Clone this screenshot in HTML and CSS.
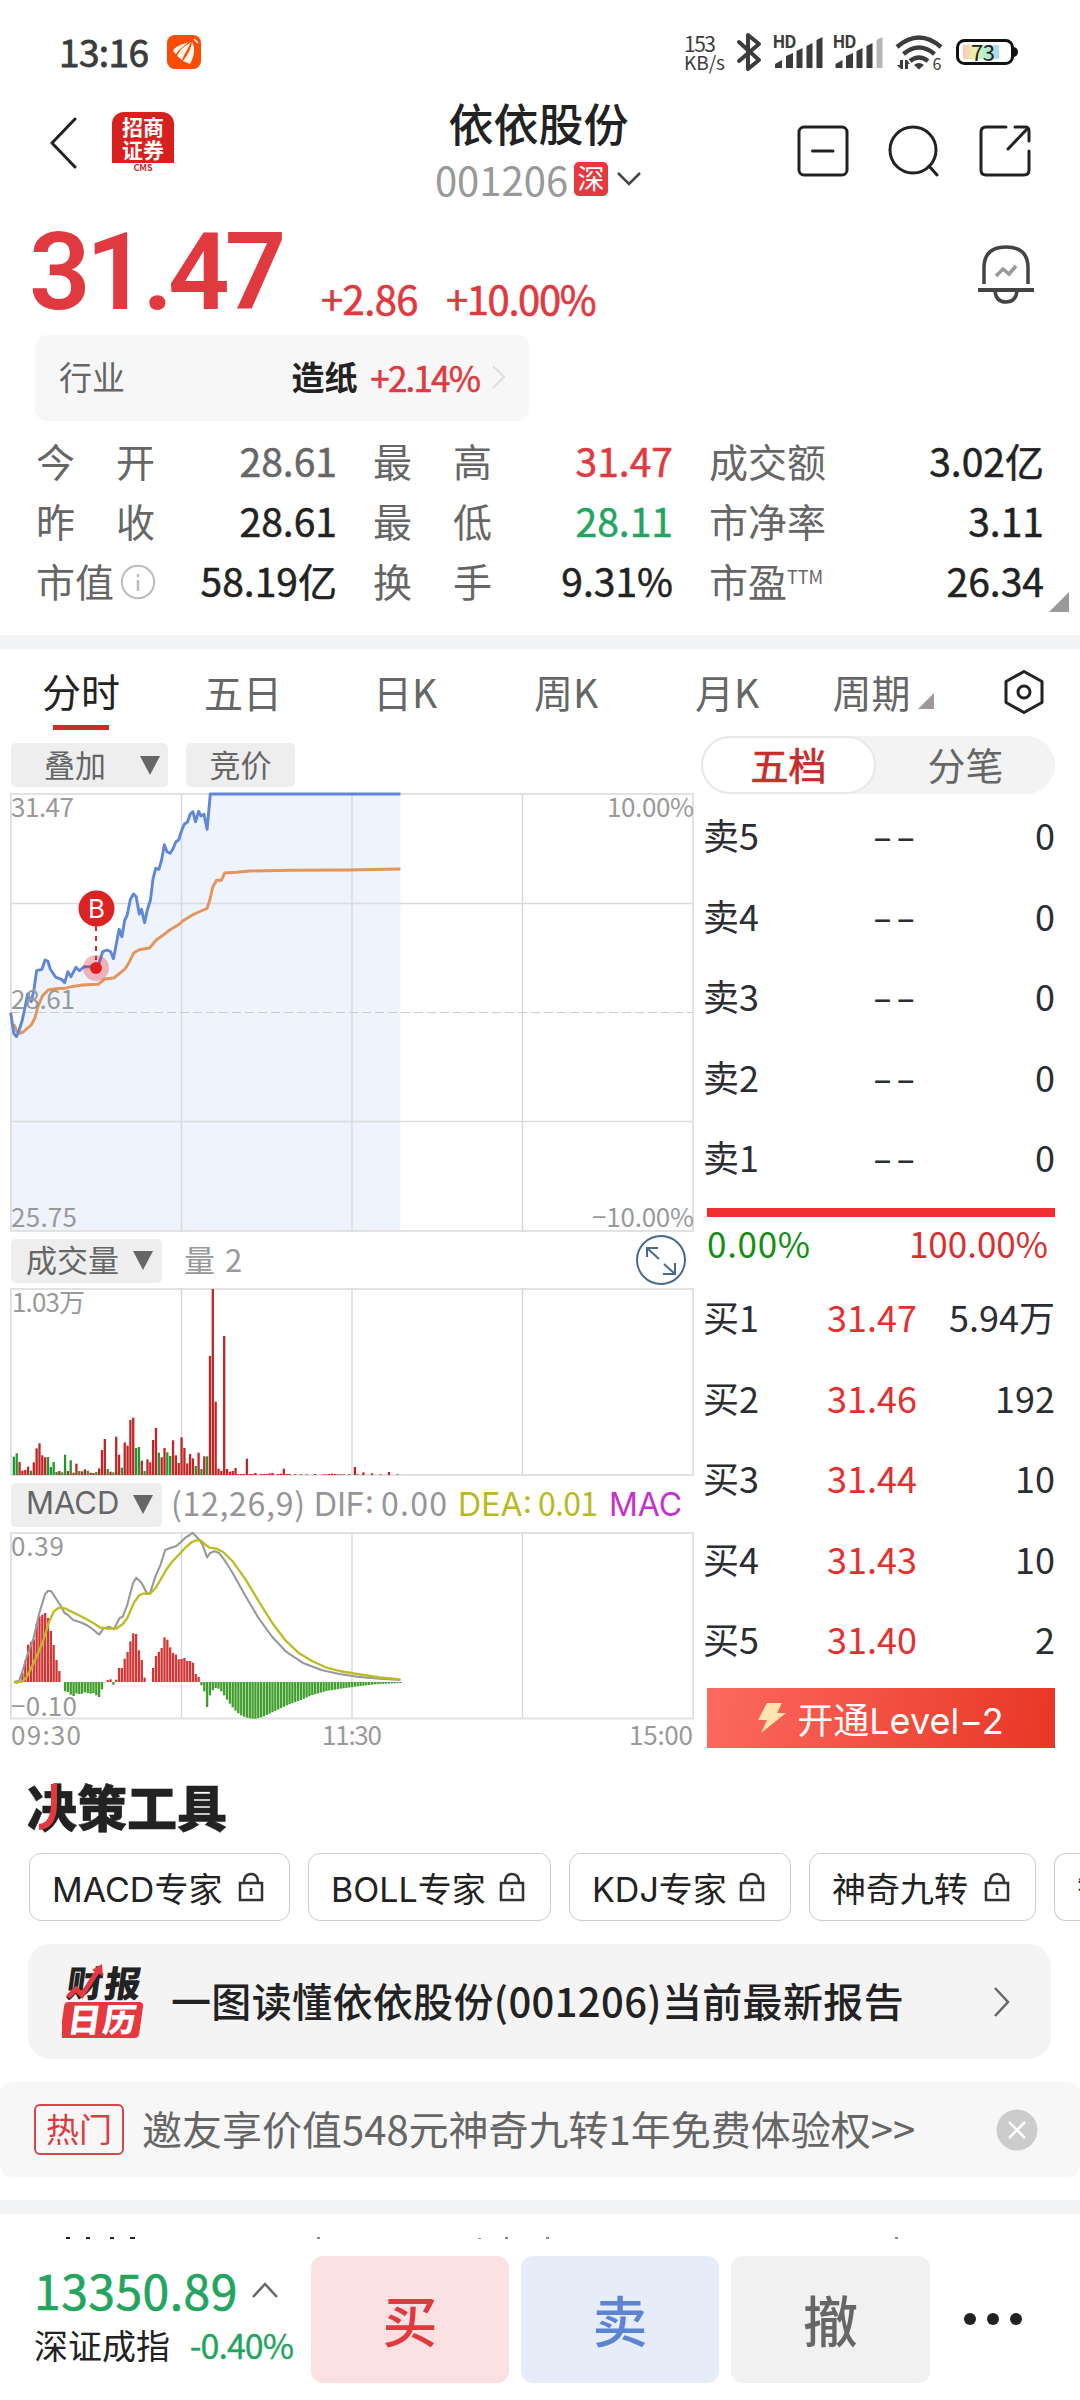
FILE: index.html
```html
<!DOCTYPE html>
<html lang="zh-CN">
<head>
<meta charset="utf-8">
<title>依依股份 001206</title>
<link rel="stylesheet" href="styles.css">
</head>
<body>
<div class="status">
  <span class="clock">13:16</span>
  <svg class="status-app" width="34" height="34" viewBox="0 0 34 34">
    <rect width="34" height="34" rx="8" fill="#fb4c05"/>
    <path d="M6 16C8 11 14 10 22 7C17 11 12 14 9 19ZM10 21C13 14 18 11 24 7C21 14 17 19 15 25ZM16 26C21 19 24 14 25 7C29 14 27 22 23 29Z" fill="#fff6e8"/>
    <path d="M27 4L31 8" stroke="#fff" stroke-width="1.5"/>
  </svg>
  <svg class="status-icons" width="340" height="44" viewBox="680 30 340 44">
    <g fill="#3c3c3c">
      <text x="684" y="52" font-size="21" textLength="32">153</text>
      <text x="684" y="70" font-size="19" textLength="41">KB/s</text>
      <text x="772.500" y="48" font-size="17" font-weight="700" textLength="24">HD</text>
      <text x="832.500" y="48" font-size="17" font-weight="700" textLength="24">HD</text>
      <path d="M739 42L759 60L748 69V35L759 44L739 61" fill="none" stroke="#3c3c3c" stroke-width="4" stroke-linejoin="round" stroke-linecap="round"/>
      <path d="M775 68v-4l7-4v8zM786 68V56l7-3v15zM796.500 68V51l6-3v20zM806.500 68V46l6-3v25zM816.500 68V40l6-3v31z"/>
      <path d="M835.500 68v-4l7-4v8zM846 68V56l7-3v15zM856.500 68V51l6-3v20zM866.500 68V46l6-3v25z"/>
      <path d="M876.500 68V40l6-3v31z" fill="#b5b5b5"/>
      <g fill="none" stroke="#3c3c3c" stroke-width="4.500">
        <path d="M897 47Q919 28 941 47"/><path d="M903.500 54Q919 41 934.500 54"/><path d="M910 61Q919 54 928 61"/>
      </g>
      <path d="M914 65Q919 61 924 65L919 69.500Z"/>
      <path d="M897 65h3v-5h3v9h-2zM905 69V60h2l3 4h-2v5z"/>
      <text x="932.500" y="70" font-size="16">6</text>
    </g>
    <defs><linearGradient id="bat"><stop offset="0" stop-color="#f9c9b8"/><stop offset=".3" stop-color="#eef0a6"/><stop offset=".6" stop-color="#b4efc4"/><stop offset="1" stop-color="#a9d9fb"/></linearGradient></defs>
    <rect x="957.500" y="40.500" width="55" height="23" rx="7" fill="#fff" stroke="#111" stroke-width="3"/>
    <rect x="963" y="45" width="36" height="14" fill="url(#bat)"/>
    <path d="M1014 47q4 1 4 5t-4 5z" fill="#111"/>
    <text x="971" y="60.500" font-size="22" fill="#222" textLength="24">73</text>
  </svg>
</div>

<header class="head">
  <div class="head-left">
    <svg width="28" height="54" viewBox="0 0 28 54"><path d="M26 3L3 27L26 51" class="line"/></svg>
    <div class="broker"><b>招商</b><b>证券</b><small>CMS</small></div>
  </div>
  <div class="head-title">
    <h1>依依股份</h1>
    <div class="code"><span>001206</span><i>深</i><svg width="26" height="16" viewBox="0 0 26 16"><path d="M2 2L13 13L24 2" fill="none" stroke="#444" stroke-width="2.500"/></svg></div>
  </div>
  <div class="head-icons">
    <svg width="52" height="52" viewBox="0 0 52 52"><rect x="2" y="2" width="48" height="48" rx="5" class="line"/><path d="M15.500 26H36" class="line"/></svg>
    <svg width="52" height="52" viewBox="0 0 52 52"><circle cx="25" cy="25" r="23" class="line"/><path d="M41 41L49 50" class="line"/></svg>
    <svg width="52" height="52" viewBox="0 0 52 52"><path d="M27 2H7Q2 2 2 7V45Q2 50 7 50H45Q50 50 50 45V26M36 2H46Q50 2 50 6V16M49 3L29 24" class="line"/></svg>
  </div>
</header>

<section class="quote">
  <strong class="price">31.47</strong>
  <span class="chg">+2.86</span>
  <span class="pct">+10.00%</span>
  <svg class="bell" width="60" height="62" viewBox="0 0 60 62"><g fill="none" stroke="#444" stroke-width="3.500"><path d="M8 40V24Q8 3 30 3T52 24V40"/><path d="M2 46H58" stroke-width="4"/><path d="M19 47Q20 58 30 58T41 47"/></g><path d="M20 32L27 25L33 30L40 22" fill="none" stroke="#999" stroke-width="3.500"/></svg>
</section>

<section class="industry">
  <span class="ind-label">行业</span><b>造纸</b><span class="ind-pct">+2.14%</span>
  <svg width="16" height="26" viewBox="0 0 16 26"><path d="M2 2L13 13L2 24" fill="none" stroke="#ddd" stroke-width="2"/></svg>
</section>

<section class="stats">
  <div><span class="sp">今开</span><em class="gray">28.61</em></div>
  <div><span class="sp">最高</span><em class="red">31.47</em></div>
  <div><span>成交额</span><em>3.02亿</em></div>
  <div><span class="sp">昨收</span><em>28.61</em></div>
  <div><span class="sp">最低</span><em class="green">28.11</em></div>
  <div><span>市净率</span><em>3.11</em></div>
  <div><span>市值<svg width="36" height="36" viewBox="0 0 36 36"><circle cx="18" cy="18" r="16.200" fill="none" stroke="#bbb" stroke-width="2"/><path d="M18 10v3M18 16v11" stroke="#bbb" stroke-width="2.500"/></svg></span><em>58.19亿</em></div>
  <div><span class="sp">换手</span><em>9.31%</em></div>
  <div><span>市盈<sup>TTM</sup></span><em>26.34</em></div>
  <svg class="corner" width="20" height="20" viewBox="0 0 20 20"><path d="M20 0V20H0Z" fill="#999"/></svg>
</section>

<div class="band"></div>

<nav class="tabs">
  <span class="on">分时</span><span>五日</span><span>日K</span><span>周K</span><span>月K</span>
  <span>周期<svg width="16" height="16" viewBox="0 0 16 16"><path d="M16 0V16H0Z" fill="#a19898"/></svg></span>
  <svg class="hex" width="42" height="46" viewBox="0 0 42 46"><path d="M21 2.500L39 12.500V33.500L21 43.500L3 33.500V12.500Z" class="line"/><circle cx="21" cy="23" r="6" class="line"/></svg>
</nav>

<main class="trade">
  <div class="charts">
    <div class="bar-row top"><button class="chip wide">叠加<i></i></button><button class="chip plain">竞价</button></div>
    <svg id="price-chart" class="chart" width="700" height="438" viewBox="0 794 700 438"></svg>
    <div class="bar-row mid"><button class="chip">成交量<i></i></button><span class="vol">量 2</span>
      <svg class="expand" width="50" height="50" viewBox="0 0 50 50"><g fill="none" stroke="#456a90" stroke-width="2"><circle cx="25" cy="25" r="24"/><path d="M11 22V13H22M11 13L23 24M39 28V39H27M39 39L28 29"/></g></svg></div>
    <svg id="volume-chart" class="chart" width="700" height="187" viewBox="0 1289 700 187"></svg>
    <div class="bar-row mid"><button class="chip latin">MACD<i></i></button>
      <svg class="macd-legend" width="520" height="57" viewBox="172 0 520 57" font-size="32">
        <g fill="#949599"><text x="171" y="39.500" textLength="134">(12,26,9)</text><text class="latin" x="314" y="39.500" textLength="60">DIF:</text><text x="381" y="39.500" textLength="66">0.00</text></g>
        <g fill="#b9b91e"><text class="latin" x="458" y="39.500" textLength="74">DEA:</text><text x="538" y="39.500" textLength="60">0.01</text></g>
        <text class="latin" x="609" y="39.500" fill="#c531cf" textLength="73">MAC</text></svg></div>
    <svg id="macd-chart" class="chart" width="700" height="227" viewBox="0 1533 700 227"></svg>
  </div>

  <aside class="book">
    <div class="seg"><span class="sel">五档</span><span>分笔</span></div>
    <div class="rows sell">
      <p><span>卖5</span><b>--</b><em>0</em></p>
      <p><span>卖4</span><b>--</b><em>0</em></p>
      <p><span>卖3</span><b>--</b><em>0</em></p>
      <p><span>卖2</span><b>--</b><em>0</em></p>
      <p><span>卖1</span><b>--</b><em>0</em></p>
    </div>
    <div class="ratio"></div>
    <div class="ratio-text"><span>0.00%</span><span>100.00%</span></div>
    <div class="rows buy">
      <p><span>买1</span><b>31.47</b><em>5.94万</em></p>
      <p><span>买2</span><b>31.46</b><em>192</em></p>
      <p><span>买3</span><b>31.44</b><em>10</em></p>
      <p><span>买4</span><b>31.43</b><em>10</em></p>
      <p><span>买5</span><b>31.40</b><em>2</em></p>
    </div>
    <button class="level2 latin"><svg width="28" height="32" viewBox="0 0 28 32"><path d="M9 1H24L19 11H28L3 31L9 18H0Z" fill="#ffe3b0"/></svg>开通Level−2</button>
  </aside>
</main>

<section class="tools">
  <h2>决策工具<svg width="30" height="50" viewBox="0 0 30 50"><path d="M17 1V20Q17 43 2 44" fill="none" stroke="#e5393f" stroke-width="6"/></svg></h2>
  <div class="tool-list latin">
    <span class="t1">MACD专家<svg class="lock" viewBox="0 0 26 30"><path d="M2 11H24V28H2ZM6 11Q6 2 13 2T20 11M13 16V23"/></svg></span>
    <span class="t2">BOLL专家<svg class="lock" viewBox="0 0 26 30"><path d="M2 11H24V28H2ZM6 11Q6 2 13 2T20 11M13 16V23"/></svg></span>
    <span class="t3">KDJ专家<svg class="lock" viewBox="0 0 26 30"><path d="M2 11H24V28H2ZM6 11Q6 2 13 2T20 11M13 16V23"/></svg></span>
    <span class="t4">神奇九转<svg class="lock" viewBox="0 0 26 30"><path d="M2 11H24V28H2ZM6 11Q6 2 13 2T20 11M13 16V23"/></svg></span>
    <span class="t5">智</span>
  </div>
</section>

<section class="report">
  <svg width="82" height="76" viewBox="0 0 82 76">
    <g transform="skewX(-8)" font-weight="900">
      <text x="8" y="33" font-size="36" fill="#222" textLength="74">财报</text>
      <rect x="8" y="38" width="79" height="36" rx="4" fill="#e5393f"/>
      <text x="14" y="68" font-size="33" fill="#fff" textLength="68">日历</text>
    </g>
    <path d="M6 33L14 25L20 31L37 5" fill="none" stroke="#e5393f" stroke-width="5"/><path d="M30 6L40 0L41 12Z" fill="#e5393f"/>
  </svg>
  <span>一图读懂依依股份(001206)当前最新报告</span>
  <svg class="arrow" width="18" height="32" viewBox="0 0 18 32"><path d="M2 2L15 16L2 30" fill="none" stroke="#666" stroke-width="2.500"/></svg>
</section>

<section class="promo">
  <b>热门</b><span>邀友享价值548元神奇九转1年免费体验权&gt;&gt;</span>
  <svg width="42" height="42" viewBox="0 0 42 42"><circle cx="21" cy="21" r="20.500" fill="#ccc"/><path d="M13 13L29 29M29 13L13 29" stroke="#fff" stroke-width="2.500"/></svg>
</section>

<div class="band second"></div>
<div class="peek"><svg width="1080" height="3" viewBox="0 0 1080 3"><path d="M66 1h4v2h-4zM86 1h4v2h-4zM110 1h4v2h-4zM130 1h5v2h-5z" fill="#222"/><path d="M317 1h3v2h-3zM478 2h3v1h-3zM505 1h3v2h-3zM546 1h3v2h-3zM895 1h3v2h-3z" fill="#888"/></svg></div>

<footer class="dock">
  <div class="index">
    <div class="index-top"><span>13350.89</span><svg width="28" height="18" viewBox="0 0 28 18"><path d="M2 15L14 2L26 15" fill="none" stroke="#666" stroke-width="2.500"/></svg></div>
    <div class="index-sub"><span>深证成指</span><em>-0.40%</em></div>
  </div>
  <button class="b-buy">买</button><button class="b-sell">卖</button><button class="b-cancel">撤</button>
  <svg class="dots" width="60" height="14" viewBox="0 0 60 14"><g fill="#222"><circle cx="7" cy="7" r="6"/><circle cx="30" cy="7" r="6"/><circle cx="53" cy="7" r="6"/></g></svg>
</footer>
<script src="charts.js"></script>
</body>
</html>
```
FILE: styles.css
```css
* { box-sizing: border-box; margin: 0; padding: 0; }
html, body { width: 1080px; height: 2400px; overflow: hidden; background: #fff; }
body, button { font-family: "Noto Sans CJK SC", "Noto Sans", sans-serif; color: #222; }
body { display: flex; flex-direction: column; }
em, i { font-style: normal; }
button { border: 0; }
svg { display: block; flex: none; }
.latin { font-family: Inter, "Noto Sans CJK SC", sans-serif; }
.line { fill: none; stroke: #222; stroke-width: 3; stroke-linecap: round; stroke-linejoin: round; }
.red { color: #e0393f; }
.green { color: #22a55f; }

.status { height: 96px; display: flex; align-items: center; padding: 8px 60px 0 59px; }
.clock { font-size: 37px; line-height: 44px; width: 108px; margin-top: -3px; letter-spacing: -.6px; color: #3c3c3c; -webkit-text-stroke: .8px #3c3c3c; }
.status-icons { margin-left: auto; }

.head { height: 116px; display: flex; justify-content: space-between; padding: 0 48px 0 49px; }
.head-left { width: 250px; display: flex; align-items: flex-start; gap: 35px; padding-top: 16px; }
.head-left > svg { margin-top: 4px; }
.broker { width: 62px; height: 62px; border-radius: 12px; display: flex; flex-direction: column; align-items: center; background: linear-gradient(#d8201f 0 51px, #fff 51px); box-shadow: 0 0 1px #aaa; padding-top: 3px; }
.broker b { font-size: 21px; line-height: 23px; color: #fff; }
.broker small { font-size: 9px; font-weight: 700; line-height: 14px; color: #c62c2c; }
.head-title { flex: 1; text-align: center; padding-right: 19px; }
.head h1 { font-size: 45px; line-height: 54px; font-weight: 500; }
.code { display: flex; align-items: center; justify-content: center; height: 54px; color: #999; font-size: 40px; line-height: 54px; margin-top: 2px; }
.code i { width: 34px; height: 34px; margin: 0 8px 0 6px; border-radius: 5px; background: #e5393f; color: #fff; font-size: 27px; line-height: 31px; }
.head-icons { display: flex; gap: 39px; padding-top: 29px; width: 235px; }

.quote { height: 123px; display: flex; align-items: flex-end; padding: 0 44px 0 29px; color: #e0393f; white-space: nowrap; }
.price { width: 292px; font-family: Roboto, sans-serif; font-size: 108px; line-height: 126px; font-weight: 600; letter-spacing: -5px; }
.chg, .pct { font-size: 40px; line-height: 54px; margin-bottom: 10px; letter-spacing: -.6px; -webkit-text-stroke: .6px; }
.chg { width: 125px; }
.pct { letter-spacing: -1.4px; }
.bell { margin: 0 0 29px auto; }

.industry { width: 494px; height: 86px; margin-left: 35px; padding: 0 22px 4px 24px; border-radius: 12px; background: #f7f7f7; display: flex; align-items: center; font-size: 33px; }
.ind-label { width: 233px; color: #666; }
.industry b { width: 79px; }
.ind-pct { font-size: 35px; width: 121px; color: #e0393f; -webkit-text-stroke: .5px; letter-spacing: -1.8px; }
.industry svg { margin-top: 2px; }

.stats { position: relative; height: 214px; padding: 9px 36px 0; display: grid; grid-template-columns: 301px 300px 335px; grid-template-rows: repeat(3, 60px); column-gap: 36px; }
.stats div { display: flex; justify-content: space-between; align-items: center; font-size: 39px; line-height: 60px; }
.stats span { display: flex; align-items: center; color: #666; }
.stats .sp { letter-spacing: 41px; }
.stats em { -webkit-text-stroke: .5px; }
.stats .gray { color: #666; }
.stats span svg { margin: 3px 0 0 6px; }
.stats sup { font-size: 18px; line-height: 18px; align-self: flex-start; margin-top: 17px; }
.corner { position: absolute; left: 1049px; top: 171px; }

.band { height: 14px; background: #f2f3f5; }

.tabs { height: 87px; display: grid; grid-template-columns: 160px 164px 160px 162px 160px 152px 1fr; align-items: start; padding-left: 1px; font-size: 39px; line-height: 84px; color: #666; text-align: center; }
.tabs span { display: flex; justify-content: center; align-items: center; }
.tabs .on { color: #222; height: 81px; line-height: 84px; background: linear-gradient(#cb2d2d, #cb2d2d) center bottom / 56px 5px no-repeat; }
.tabs span svg { margin: 20px 0 0 7px; }
.tabs .hex { margin: 20px 0 0 44px; }

.trade { display: flex; height: 1024px; }
.charts { width: 700px; }
.chart { overflow: visible; font-size: 25px; }
.bar-row { display: flex; align-items: center; padding-left: 11px; }
.top { height: 58px; gap: 18px; }
.mid { height: 57px; }
.chip { width: 151px; height: 44px; padding: 0 9px 3px 15px; border-radius: 5px; background: #eee; color: #666; font-size: 31px; line-height: 40px; display: flex; justify-content: space-between; align-items: center; white-space: nowrap; }
.chip i { margin-top: 3px; border: 10px solid transparent; border-top: 19px solid #666; border-bottom: 0; }
.chip.wide { width: 157px; padding: 0 8px 3px 33px; }
.chip.plain { width: 109px; padding: 0 0 3px; justify-content: center; }
.vol { margin: -3px 0 0 22px; font-size: 31px; line-height: 40px; color: #999; word-spacing: 3px; }
.expand { margin: -2px 14px 0 auto; }
.macd-legend { margin-left: 10px; }

.book { width: 356px; padding-left: 5px; }
.seg { width: 354px; height: 58px; margin-left: -4px; display: flex; border-radius: 29px; background: #f3f3f3; font-size: 38px; line-height: 55px; text-align: center; color: #666; }
.seg span { flex: 1; }
.seg .sel { width: 175px; flex: none; border: 2px solid #e8e8e8; border-radius: 29px; background: #fff; color: #c92a2a; -webkit-text-stroke: .7px; line-height: 51px; }
.rows { font-size: 36px; line-height: 76px; color: #2b2d33; }
.rows p { height: 80.600px; display: flex; margin-left: -2px; }
.rows span { width: 92px; }
.rows b { width: 122px; text-align: right; font-weight: 400; white-space: nowrap; }
.rows em { flex: 1; text-align: right; padding-right: 1px; }
.sell { padding-top: 2px; height: 414px; }
.sell b { width: 124px; letter-spacing: 2px; transform: scaleX(1.6); transform-origin: right; }
.buy b { color: #e53030; }
.buy { padding-top: 1px; height: 404px; }
.ratio { width: 348px; height: 9px; margin-left: 2px; background: #f03030; }
.ratio-text { height: 60px; padding: 0 8px 0 2px; display: flex; justify-content: space-between; font-size: 35px; line-height: 51px; color: #d83030; }
.ratio-text span:first-child { color: #139013; letter-spacing: .7px; }
.level2 { width: 348px; height: 60px; margin: 7px 0 0 2px; display: flex; align-items: center; justify-content: center; background: linear-gradient(100deg, #fc6a5e, #e83626); color: #fff; font-size: 36px; }
.level2 svg { margin: 0 11px 0 0; }

.tools { height: 161px; }
.tools h2 { position: relative; height: 93px; padding-left: 27px; font-size: 50px; line-height: 90px; font-weight: 900; -webkit-text-stroke: .5px; }
.tools h2 svg { position: absolute; left: 37px; top: 23px; }
.tool-list { display: flex; gap: 18px; padding-left: 29px; overflow: hidden; font-size: 34px; }
.tool-list span { flex: none; height: 68px; padding: 0 25px 0 22px; display: flex; align-items: center; justify-content: space-between; border: 1.500px solid #ccc; border-radius: 12px; white-space: nowrap; }
.t1 { width: 261px; } .t2 { width: 243px; } .t3 { width: 222px; } .t4 { width: 227px; }
.tool-list .t5 { width: 27px; border-right: 0; border-radius: 12px 0 0 12px; padding-right: 0; overflow: hidden; }
.lock { width: 26px; height: 30px; fill: none; stroke: #333; stroke-width: 2.500; }

.report { width: 1023px; height: 115px; margin: 23px 0 0 28px; padding: 0 40px 0 34px; display: flex; align-items: center; border-radius: 22px; background: #f4f4f4; font-size: 40px; font-weight: 500; white-space: nowrap; }
.report span { margin: -3px 0 0 27px; letter-spacing: .35px; }
.arrow { margin-left: auto; }

.promo { height: 95px; margin-top: 23px; padding: 0 42px 0 34px; display: flex; align-items: center; border-radius: 12px; background: #f7f7f7; font-size: 40px; color: #666; white-space: nowrap; }
.promo b { width: 90px; height: 51px; border: 2px solid #d64549; border-radius: 6px; text-align: center; color: #e0393f; font-size: 33px; line-height: 44px; font-weight: 400; }
.promo span { margin: -3px 0 0 18px; }
.promo svg { margin-left: auto; }
.second { margin-top: 23px; }
.peek { height: 25px; padding-top: 22px; }

.dock { height: 161px; display: flex; padding: 17px 34px 0 34px; }
.index { width: 277px; white-space: nowrap; }
.index-top { height: 66px; display: flex; align-items: center; color: #22a55f; font-size: 48px; line-height: 66px; letter-spacing: .5px; -webkit-text-stroke: .7px; }
.index-top svg { margin: 4px 0 0 13px; }
.index-sub { display: flex; justify-content: space-between; width: 259px; font-size: 34px; line-height: 46px; }
.index-sub em { color: #22a55f; letter-spacing: -1px; -webkit-text-stroke: .3px; }
.dock button { width: 198px; height: 127px; margin-right: 12px; padding-bottom: 4px; border-radius: 12px; font-size: 55px; font-weight: 500; }
.dock .b-buy { background: #fce1e2; color: #e0393f; }
.dock .b-sell { background: #e6ecf8; color: #5c84d2; }
.dock .b-cancel { background: #f1f1f1; color: #666; width: 199px; }
.dots { margin: 56px 0 0 21px; }
```
FILE: charts.js
```js
const NS = 'http://www.w3.org/2000/svg';
const LEFT = 11, RIGHT = 693, STEP = 682 / 240;

function add(svg, tag, attrs, text) {
  const el = document.createElementNS(NS, tag);
  for (const k in attrs) el.setAttribute(k, attrs[k]);
  if (text) el.textContent = text;
  svg.appendChild(el);
  return el;
}
function label(svg, x, y, text, width, size) {
  add(svg, 'text', { x, y, fill: '#999', 'font-size': size || 25, textLength: width }, text);
}
function frame(svg, top, bottom) {
  add(svg, 'rect', { x: LEFT, y: top, width: RIGHT - LEFT, height: bottom - top, fill: 'none', stroke: '#e2e2e2', 'stroke-width': 2 });
  [181.5, 352, 522.5].forEach(x => add(svg, 'path', { d: `M${x} ${top}V${bottom}`, stroke: '#d8d8dc', 'stroke-width': 1.4 }));
}
// points are flat x,y lists in plot units: 2.24 per pixel across, 3 per pixel down
function path(list, top) {
  let d = '';
  for (let i = 0; i < list.length; i += 2) d += (i ? 'L' : 'M') + (list[i] / 2.24).toFixed(1) + ' ' + (top + list[i + 1] / 3).toFixed(1);
  return d;
}
function line(svg, d, color, w) {
  add(svg, 'path', { d, fill: 'none', stroke: color, 'stroke-width': w, 'stroke-linejoin': 'round' });
}
function bar(svg, i, base, h, color) {
  if (h) add(svg, 'rect', { x: (13.9 + i * STEP - 1.15).toFixed(2), y: Math.min(base, base - h).toFixed(2), width: 2.3, height: Math.abs(h).toFixed(2), fill: color });
}

const price = document.getElementById('price-chart');
const pricePts = [24,728,31,790,37,800,43,780,50,750,56,712,62,672,70,695,76,660,82,602,94,598,101,570,107,573,113,598,125,622,138,628,145,638,152,605,159,620,170,592,178,602,188,590,200,590,215,593,222,580,230,545,240,540,248,545,254,566,260,525,267,478,273,500,279,452,285,435,292,388,299,372,305,380,312,432,317,418,324,458,330,420,337,390,343,325,349,295,356,298,362,270,368,224,374,245,381,250,387,238,394,215,400,210,408,178,413,162,420,156,426,132,432,125,438,155,445,124,450,138,457,133,464,178,471,72,897,72];
const avgPts = [31,762,37,782,43,790,52,786,70,765,78,745,85,710,95,678,108,660,125,656,145,655,160,650,185,645,220,643,235,627,255,624,270,608,280,597,290,575,300,548,312,539,335,534,350,510,365,496,380,480,400,464,410,452,430,436,450,423,464,415,470,390,477,350,485,331,496,331,503,309,530,307,560,303,650,301,780,300,897,297];
add(price, 'path', { d: path(pricePts, 770) + 'V1231H11Z', fill: '#eef3fd' });
frame(price, 794, 1231);
[903.5, 1121.5].forEach(y => add(price, 'path', { d: `M11 ${y}H693`, stroke: '#dcdcdf', 'stroke-width': 1.4 }));
add(price, 'path', { d: 'M11 1012.5H693', stroke: '#ccc', 'stroke-width': 1.2, 'stroke-dasharray': '9 4' });
line(price, path(avgPts, 770), '#e3955a', 2.9);
line(price, path(pricePts, 770), '#5f86d8', 2.9);
add(price, 'path', { d: 'M96 926V960', stroke: '#d22', 'stroke-width': 2, 'stroke-dasharray': '5 5' });
add(price, 'circle', { cx: 96, cy: 968, r: 13, fill: '#e02020', opacity: .3 });
add(price, 'circle', { cx: 96, cy: 968, r: 6, fill: '#e02020' });
add(price, 'circle', { cx: 96.5, cy: 908.5, r: 18, fill: '#dc2222' });
add(price, 'text', { x: 96.5, y: 918, fill: '#fff', 'font-size': 26, 'text-anchor': 'middle', class: 'latin' }, 'B');
label(price, 11, 817, '31.47', 63, 26);
label(price, 11, 1009, '28.61', 64, 26);
label(price, 11, 1227, '25.75', 66, 26);
label(price, 607, 817, '10.00%', 87, 26);
label(price, 592, 1227, '−10.00%', 102, 26);

const volume = document.getElementById('volume-chart');
frame(volume, 1289, 1475);
label(volume, 12, 1312, '1.03万', 73, 26);
// negative entries are falling minutes
const vols = [-55,-65,39,13,15,25,-13,38,80,95,59,53,-54,-24,-39,-9,12,-8,-61,12,-44,7,34,-12,11,17,-13,7,6,-9,20,75,108,-18,10,-8,115,61,-22,98,88,165,172,-81,-84,43,-12,47,38,105,141,-67,53,81,-68,-57,104,59,36,113,81,35,63,50,-27,67,-18,56,-56,357,558,220,19,12,417,18,10,12,21,3,3,3,49,3,3,6,0,3,3,3,5,6,0,3,4,19,3,3,0,2,0,2,0,2,0,0,3,0,0,2,2,3,4,3,2,2,2,0,2,0,24,2,0,8,0,0,5,0,0,2,0,0,9,0,0,2];
vols.forEach((v, i) => bar(volume, i, 1475, Math.abs(v) / 3, v < 0 ? '#23962f' : '#c02626'));

const macd = document.getElementById('macd-chart');
frame(macd, 1533, 1718.5);
label(macd, 11, 1555.5, '0.39', 53, 26);
label(macd, 11, 1716, '−0.10', 66, 26);
label(macd, 11, 1745, '09:30', 70, 26);
label(macd, 322, 1745, '11:30', 60, 26);
label(macd, 629, 1745, '15:00', 64, 26);
const hist = [0,-5,2,28,64,112,120,128,175,197,202,207,192,153,111,66,33,0,-28,-30,-38,-42,-34,-36,-35,-31,-33,-35,-33,-40,-45,-22,-1,6,8,-8,7,42,42,70,90,122,146,144,95,66,13,0,0,42,78,90,102,134,127,104,87,82,68,69,72,63,63,58,24,15,-10,-28,-75,-40,-24,-18,-20,-28,-40,-53,-65,-76,-86,-94,-100,-104,-107,-109,-110,-110,-108,-106,-103,-99];
const tail = [[89,-99],[96,-70],[101,-54],[105,-39],[110,-27],[115,-20],[121,-13],[127,-7],[136,-3]];
for (let k = 1; k < tail.length; k++) {
  const [a, va] = tail[k - 1], [b, vb] = tail[k];
  for (let i = a + 1; i <= b; i++) hist[i] = va + (vb - va) * (i - a) / (b - a);
}
hist.forEach((v, i) => bar(macd, i, 1682, v / 3, v < 0 ? '#3f9e2c' : '#d33434'));
const dif = [31,636,43,632,50,605,60,560,75,505,88,430,101,372,108,362,115,364,125,385,135,405,145,430,152,435,164,450,180,457,195,466,210,480,222,494,232,475,245,470,255,478,268,444,275,440,285,405,298,340,305,323,317,338,330,372,336,370,349,317,360,283,370,240,380,235,395,228,406,215,415,203,425,195,431,188,437,196,447,210,455,228,464,262,470,250,480,244,490,248,500,265,520,306,550,378,580,446,610,501,640,544,680,580,720,600,760,612,800,620,850,626,897,630];
const dea = [31,637,50,635,60,620,75,580,95,520,110,455,120,425,132,413,145,415,165,428,190,445,210,460,225,473,240,476,260,476,275,462,285,445,300,398,312,376,320,371,336,371,348,355,360,328,372,300,385,276,400,255,415,233,430,216,440,211,450,212,460,224,470,233,485,236,500,246,520,272,550,328,580,395,610,459,640,512,670,550,700,574,730,592,760,603,800,612,850,622,897,628];
line(macd, path(dif, 1470), '#97989b', 2.1);
line(macd, path(dea, 1470), '#bcbc22', 2.3);
```
